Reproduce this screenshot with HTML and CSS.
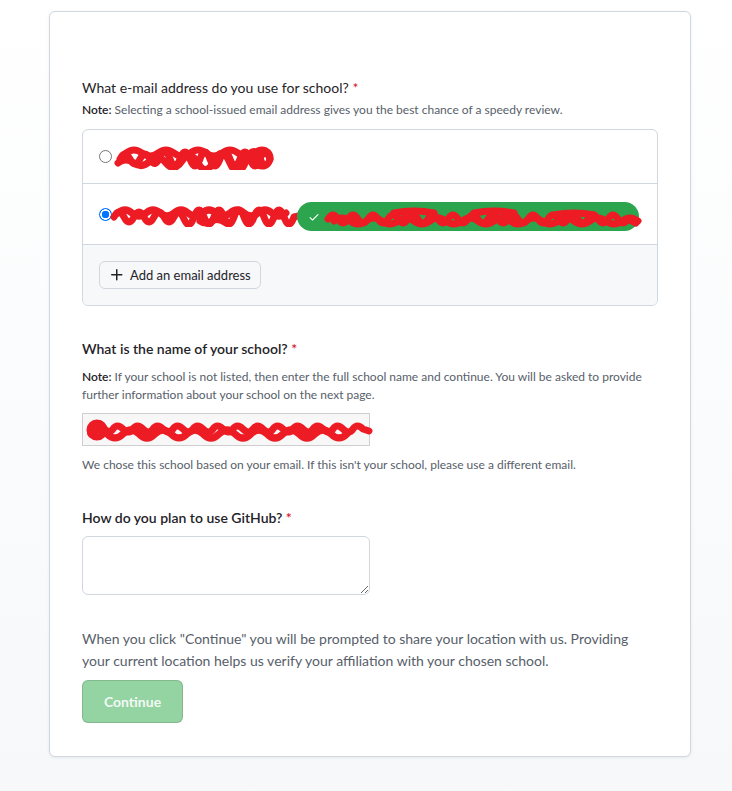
FILE: index.html
```html
<!DOCTYPE html>
<html lang="en">
<head>
<meta charset="utf-8">
<title>Education benefits</title>
<link rel="stylesheet" href="styles.css">
</head>
<body>
<div class="page">
  <div class="card">
    <form class="form">
      <div class="group">
        <label class="q q-light">What e-mail address do you use for school? <span class="req">*</span></label>
        <p class="note"><strong>Note:</strong> Selecting a school-issued email address gives you the best chance of a speedy review.</p>
        <div class="box">
          <div class="box-row row1">
            <span class="radio"></span>
            <svg class="scribble s1" width="162" height="26" viewBox="0 0 162 26"><path d="M6 15 q5 -10 10 0 t10 0 t10 0 t10 -2 t10 2 t10 0 t10 0 t10 0 t10 0 t10 0 t10 0 t10 0 t10 0 t10 0 t10 0" /><path d="M4 19 q8 -6 16 0 t16 -2 t16 2 t16 -2 t16 2 t16 -2 t16 2 t16 -2 t16 2" /><path d="M12 9 q8 -6 16 0 t16 0 t16 0 t16 0 t16 0 t16 0 t16 0 t16 2" /><circle cx="148" cy="14" r="8" /></svg>
          </div>
          <div class="box-row row2">
            <span class="radio checked"></span>
            <svg class="scribble s2" width="188" height="26" viewBox="0 0 188 26"><path d="M4 16 q5 -10 10 0 t10 0 t10 0 t10 0 t10 0 t10 0 t10 2 t10 -2 t10 0 t10 0 t10 0 t10 0 t10 0 t10 0 t10 0 t10 0 t10 0 t10 0 l8 -2" /><path d="M8 12 q7 -6 14 0 t14 0 t14 0 t14 0 t14 0 t14 0 t14 0 t14 0 t14 0 t14 0 t14 0 t14 0" /><path d="M90 20 q6 4 12 0 t14 2" /></svg>
            <span class="pill">
              <svg class="check" width="12" height="12" viewBox="0 0 16 16"><path d="M13.78 4.22a.75.75 0 0 1 0 1.06l-7.25 7.25a.75.75 0 0 1-1.06 0L2.220 9.28a.75.75 0 0 1 1.06-1.06L6 10.94l6.72-6.72a.75.75 0 0 1 1.06 0Z"/></svg>
              <svg class="scribble s3" width="318" height="22" viewBox="0 0 318 22"><path d="M4 12 q5 -8 10 0 t10 0 t10 0 t10 0 t10 0 t10 0 t10 0 t10 0 t10 0 t10 0 t10 0 t10 0 t10 0 t10 0 t10 0 t10 0 t10 0 t10 0 t10 0 t10 0 t10 0 t10 0 t10 0 t10 0 t10 0 t10 0 t10 0 t10 0 t10 0 t10 0 l8 4" /><path d="M10 14 q8 -6 16 0 t16 0 t16 0 t16 0 t16 0 t16 0 t16 0 t16 0 t16 0 t16 0 t16 0 t16 0 t16 0 t16 0 t16 0 t16 0 t16 0 t16 0 t16 0" /><path d="M70 6 q20 -4 40 0 M150 6 q20 -4 40 0 M230 8 q20 -4 40 0" /></svg>
            </span>
          </div>
          <div class="box-row row3">
            <button type="button" class="btn">
              <svg class="plus" width="16" height="16" viewBox="0 0 16 16"><path d="M7.750 2a.75.75 0 0 1 .75.75V7h4.25a.75.75 0 0 1 0 1.5H8.5v4.25a.75.75 0 0 1-1.5 0V8.5H2.75a.75.75 0 0 1 0-1.5H7V2.75A.75.75 0 0 1 7.75 2Z"/></svg>
              <span>Add an email address</span>
            </button>
          </div>
        </div>
      </div>

      <div class="group g2">
        <label class="q">What is the name of your school? <span class="req">*</span></label>
        <p class="note"><strong>Note:</strong> If your school is not listed, then enter the full school name and continue. You will be asked to provide further information about your school on the next page.</p>
        <div class="school-input">
          <svg class="scribble s4" width="288" height="30" viewBox="0 0 288 30"><path d="M8 14 q4 -10 10 -2 t10 2 t10 0 t10 0 t10 0 t10 0 t10 0 t10 0 t10 0 t10 0 t10 0 t10 0 t10 0 t10 0 t10 0 t10 0 t10 0 t10 0 t10 0 t10 0 t10 0 t10 0 t10 0 t10 0 t10 0 t10 0 t10 0 l6 2" /><path d="M6 19 q8 -8 16 0 t16 0 t16 0 t16 0 t16 0 t16 0 t16 0 t16 0 t16 0 t16 0 t16 0 t16 0 t16 0 t16 0 t16 0 t16 0" /><circle cx="12" cy="15" r="7" /></svg>
        </div>
        <p class="hint">We chose this school based on your email. If this isn't your school, please use a different email.</p>
      </div>

      <div class="group g3">
        <label class="q">How do you plan to use GitHub? <span class="req">*</span></label>
        <textarea class="area"></textarea>
      </div>

      <p class="info">When you click "Continue" you will be prompted to share your location with us. Providing your current location helps us verify your affiliation with your chosen school.</p>
      <button type="button" class="continue" disabled>Continue</button>
    </form>
  </div>
</div>
</body>
</html>
```

FILE: styles.css
```css
html, body {
  margin: 0;
  padding: 0;
}
body {
  min-height: 791px;
  background: linear-gradient(180deg, #ffffff 0%, #f6f8fa 100%);
  font-family: "Segoe UI", Lato, "Liberation Sans", sans-serif;
  color: #1f2328;
  font-size: 14px;
}
.page {
  padding: 11px 0 0 49px;
}
.card {
  width: 640px;
  box-sizing: content-box;
  background: #fff;
  border: 1px solid #d0d7de;
  border-radius: 6px;
  box-shadow: 0 1px 3px rgba(140, 149, 159, 0.15);
}
.form {
  padding: 66px 32px 33px 32px;
}
.q {
  display: block;
  font-size: 14px;
  line-height: 20px;
  font-weight: 600;
}
.q-light {
  font-weight: 400;
}
.req {
  color: #cf222e;
}
.note {
  margin: 3px 0 0;
  font-size: 12px;
  line-height: 18px;
  color: #57606a;
}
.note strong {
  color: #1f2328;
  font-weight: 600;
}
.box {
  margin-top: 10px;
  border: 1px solid #d0d7de;
  border-radius: 6px;
  overflow: hidden;
}
.box-row {
  display: flex;
  align-items: center;
  padding: 0 16px;
}
.row1 {
  height: 53px;
  border-bottom: 1px solid #d0d7de;
}
.row2 {
  height: 60px;
  border-bottom: 1px solid #d0d7de;
}
.row3 {
  background: #f6f8fa;
  padding: 16px;
}
.radio {
  width: 11px;
  height: 11px;
  border: 1px solid #767676;
  border-radius: 50%;
  flex: none;
  background: #fff;
}
.radio.checked {
  border: none;
  width: 13px;
  height: 13px;
  background: radial-gradient(circle, #0075ff 0 3.5px, #fff 4px 5px, #0075ff 5.5px);
}
.scribble {
  flex: none;
  display: block;
}
.scribble path, .scribble circle {
  fill: none;
  stroke: #ed1c24;
  stroke-width: 7;
  stroke-linecap: round;
  stroke-linejoin: round;
}
.s1 { margin-left: 2px; margin-top: 0; }
.s2 { margin-left: -2px; }
.s3 { margin-left: 4px; margin-top: 2px; }
.pill {
  display: flex;
  align-items: center;
  width: 342px;
  height: 29px;
  box-sizing: border-box;
  background: #2da44e;
  border-radius: 15px;
  padding-left: 11px;
  margin-left: -1px;
  margin-top: 5px;
}
.check {
  fill: #fff;
  flex: none;
}
.btn {
  display: inline-flex;
  align-items: center;
  gap: 5px;
  height: 28px;
  padding: 0 9px 0 9px;
  font: inherit;
  font-size: 13px;
  font-weight: 400;
  color: #1f2328;
  background: #f6f8fa;
  border: 1px solid #d0d7de;
  border-radius: 6px;
}
.plus {
  fill: #1f2328;
  flex: none;
}
.g2 {
  margin-top: 33px;
}
.g2 .note {
  margin-top: 9px;
}
.school-input {
  margin-top: 9px;
  width: 288px;
  height: 33px;
  box-sizing: border-box;
  border: 1px solid #cfcfcf;
  background: #f7f7f7;
  display: flex;
  align-items: center;
}
.s4 { margin-left: 2px; }
.hint {
  margin: 10px 0 0;
  font-size: 12px;
  line-height: 18px;
  color: #57606a;
}
.g3 {
  margin-top: 34px;
}
.area {
  display: block;
  margin-top: 8px;
  width: 288px;
  height: 59px;
  box-sizing: border-box;
  border: 1px solid #d0d7de;
  border-radius: 6px;
  background: #fff;
  resize: vertical;
}
.info {
  margin: 33px 0 0;
  font-size: 14px;
  line-height: 22px;
  color: #57606a;
}
.continue {
  display: block;
  margin-top: 8px;
  height: 43px;
  padding: 0 20px;
  width: 101px;
  font: inherit;
  font-size: 14px;
  font-weight: 700;
  color: rgba(255, 255, 255, 0.9);
  background: #94d3a2;
  border: 1px solid rgba(31, 35, 40, 0.15);
  border-radius: 6px;
}
```
